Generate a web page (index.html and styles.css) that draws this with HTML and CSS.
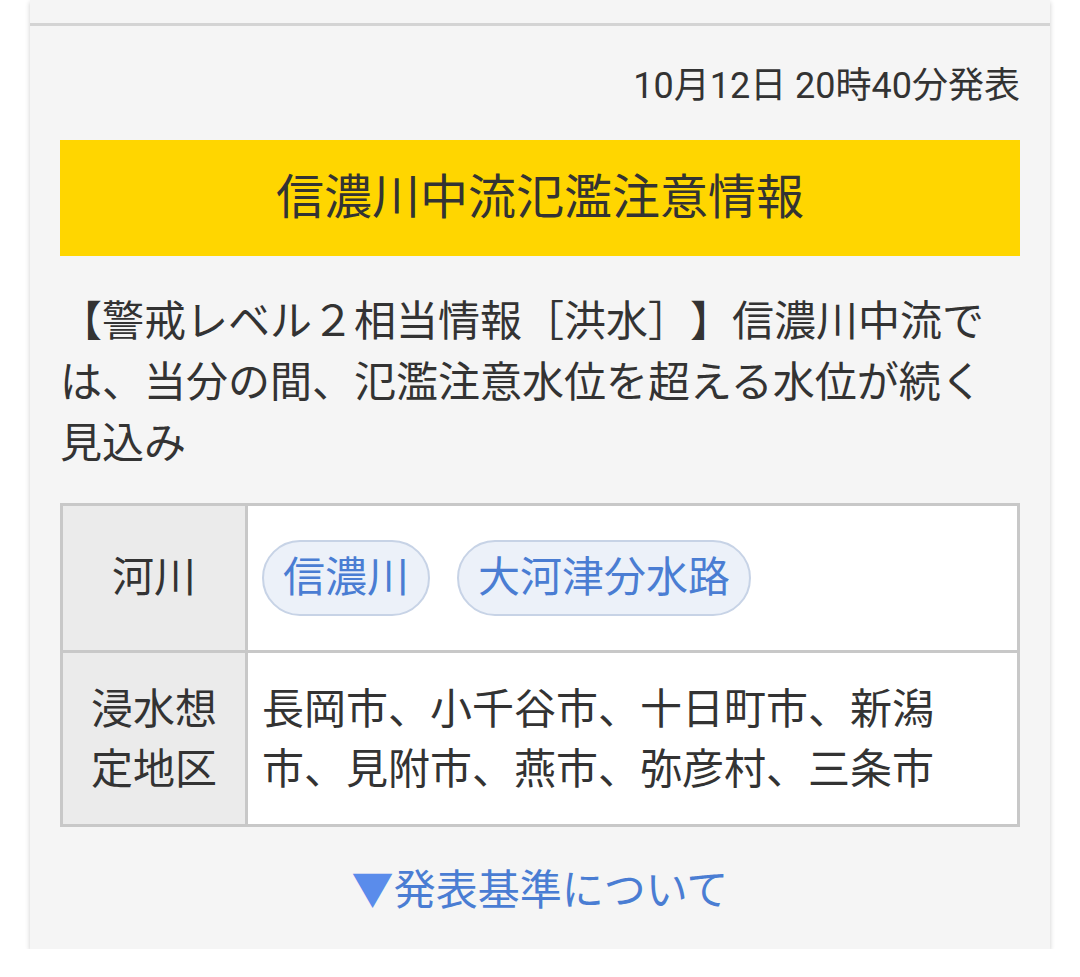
FILE: index.html
```
<!DOCTYPE html>
<html lang="ja">
<head>
    <meta charset="UTF-8">
    <title>氾濫注意情報</title>
    <link rel="stylesheet" href="styles.css">
</head>
<body>
    <div id="wrap">
        <div class="prev"></div>

        <section class="card">
            <p class="date">10月12日 20時40分発表</p>

            <h1 class="title">信濃川中流氾濫注意情報</h1>

            <p class="desc">【警戒レベル２相当情報［洪水］】信濃川中流では、当分の間、氾濫注意水位を超える水位が続く見込み</p>

            <table class="info">
                <tr class="river">
                    <th>河川</th>
                    <td>
                        <div class="pills">
                            <span class="pill">信濃川</span>
                            <span class="pill">大河津分水路</span>
                        </div>
                    </td>
                </tr>
                <tr class="area">
                    <th>浸水想定地区</th>
                    <td>長岡市、小千谷市、十日町市、新潟市、見附市、燕市、弥彦村、三条市</td>
                </tr>
            </table>

            <p class="more"><span class="arrow">▼</span>発表基準について</p>
        </section>
    </div>
</body>
</html>
```

FILE: styles.css
```
body{
    margin: 0;
    background: #fff;
    font-family: Roboto, "Noto Sans CJK JP", sans-serif;
    color: #333;
    text-spacing-trim: space-all;
}

#wrap{
    width: 1020px;
    margin-left: 30px;
    background: #f5f5f5;
    box-shadow: 0 2px 5px rgba(0,0,0,.2);
}

.prev{
    height: 23px;
    border-bottom: 3px solid #d4d4d4;
}

.card{
    padding: 34px 30px 28px;
}

.date{
    margin: 0;
    text-align: right;
    font-size: 36px;
    line-height: 52px;
}

.title{
    margin: 28px 0 0;
    height: 116px;
    line-height: 116px;
    background: #ffd600;
    text-align: center;
    font-size: 48px;
    font-weight: normal;
    color: #333;
}

.desc{
    margin: 35px 0 0;
    font-size: 42px;
    line-height: 61px;
}

.info{
    width: 100%;
    margin-top: 29px;
    border-collapse: collapse;
    background: #fff;
    font-size: 42px;
}

.info th,
.info td{
    border: 3px solid #c8c8c8;
}

.info th{
    width: 142px;
    padding: 0 20px;
    background: #ebebeb;
    font-weight: normal;
    line-height: 60px;
}

.info td{
    padding: 0 50px 0 14px;
}

.river td{
    padding-top: 34px;
    padding-bottom: 34px;
}

.area th,
.area td{
    padding-top: 27px;
    padding-bottom: 24px;
    line-height: 60px;
}

.pills{
    display: flex;
    gap: 27px;
}

.pill{
    padding: 0 19px;
    line-height: 72px;
    border: 2px solid #c7d3e6;
    border-radius: 40px;
    background: #ecf1f9;
    color: #4a7dd3;
}

.more{
    margin: 34px 0 0;
    text-align: center;
    font-size: 42px;
    line-height: 60px;
    color: #4a7dd3;
}

.more .arrow{
    color: #5a8ceb;
}
```
